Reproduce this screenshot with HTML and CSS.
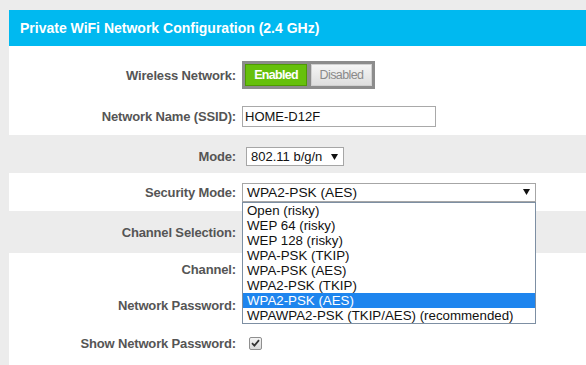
FILE: index.html
```html
<!DOCTYPE html>
<html>
<head>
<meta charset="utf-8">
<title>Private WiFi Network Configuration</title>
<link rel="stylesheet" href="styles.css">
</head>
<body>
<div class="panel">
  <h2 class="panel-title">Private WiFi Network Configuration (2.4 GHz)</h2>
  <div class="form">
    <div class="row">
      <span class="lbl">Wireless Network:</span>
      <div class="toggle">
        <span class="tg-btn tg-on">Enabled</span>
        <span class="tg-btn tg-off">Disabled</span>
      </div>
    </div>
    <div class="row">
      <span class="lbl">Network Name (SSID):</span>
      <div class="text-input">HOME-D12F</div>
    </div>
    <div class="row shade">
      <span class="lbl">Mode:</span>
      <div class="select select-mode">
        <span class="select-value">802.11 b/g/n</span>
        <svg class="arrow" width="7" height="6" viewBox="0 0 7 6"><path d="M0 0H7L3.5 6Z" fill="#111"/></svg>
      </div>
    </div>
    <div class="row">
      <span class="lbl">Security Mode:</span>
      <div class="select select-security">
        <span class="select-value">WPA2-PSK (AES)</span>
        <svg class="arrow" width="7" height="6" viewBox="0 0 7 6"><path d="M0 0H7L3.5 6Z" fill="#111"/></svg>
        <ul class="dropdown">
          <li>Open (risky)</li>
          <li>WEP 64 (risky)</li>
          <li>WEP 128 (risky)</li>
          <li>WPA-PSK (TKIP)</li>
          <li>WPA-PSK (AES)</li>
          <li>WPA2-PSK (TKIP)</li>
          <li class="active">WPA2-PSK (AES)</li>
          <li>WPAWPA2-PSK (TKIP/AES) (recommended)</li>
        </ul>
      </div>
    </div>
    <div class="row shade">
      <span class="lbl">Channel Selection:</span>
    </div>
    <div class="row">
      <span class="lbl">Channel:</span>
    </div>
    <div class="row">
      <span class="lbl">Network Password:</span>
    </div>
    <div class="row">
      <span class="lbl">Show Network Password:</span>
      <span class="checkbox">
        <svg width="9" height="8" viewBox="0 0 9 8"><path d="M1 4.2L3.4 6.6L8 1.2" fill="none" stroke="#333" stroke-width="1.8"/></svg>
      </span>
    </div>
  </div>
</div>
</body>
</html>
```
FILE: styles.css
```css
html, body {
  margin: 0;
  padding: 0;
}
body {
  background: #ececec;
  font-family: "Liberation Sans", Arial, sans-serif;
  overflow: hidden;
}
.panel {
  margin: 10px 0 0 9px;
  background: #fff;
  height: 355px;
}
.panel-title {
  margin: 0;
  height: 36px;
  line-height: 36px;
  background: #00b9f0;
  color: #fff;
  font-size: 14px;
  font-weight: bold;
  padding-left: 11px;
}
.form {
  display: flex;
  flex-direction: column;
}
.row {
  display: flex;
  align-items: center;
  box-sizing: border-box;
}
.row:nth-child(1) { height: 52px; padding-top: 6px; }
.row:nth-child(2) { height: 37px; }
.row:nth-child(3) { height: 38px; padding-top: 5px; }
.row:nth-child(4) { height: 38px; }
.row:nth-child(5) { height: 42px; }
.row:nth-child(6) { height: 32px; }
.row:nth-child(7) { height: 41px; }
.row:nth-child(8) { height: 34px; }
.shade {
  background: #ececec;
}
.lbl {
  width: 227px;
  margin-right: 6px;
  text-align: right;
  font-size: 13px;
  font-weight: bold;
  color: #555;
  letter-spacing: -0.15px;
}
.toggle {
  display: flex;
  gap: 4px;
  padding: 3px;
  background: #8c8c8c;
}
.tg-btn {
  box-sizing: border-box;
  height: 22px;
  line-height: 20px;
  text-align: center;
  font-size: 12.5px;
}
.tg-on {
  width: 62px;
  background: #66c00c;
  border: 1px solid #4e9a02;
  color: #fff;
  font-weight: bold;
  letter-spacing: -0.7px;
}
.tg-off {
  width: 61px;
  background: linear-gradient(#f5f5f5, #dedede);
  border: 1px solid #d0d0d0;
  color: #8a8a8a;
  letter-spacing: -0.6px;
}
.text-input {
  box-sizing: border-box;
  width: 194px;
  height: 21px;
  line-height: 19px;
  border: 1px solid #a9a9a9;
  padding: 0 2px;
  font-size: 13px;
  color: #111;
}
.select {
  position: relative;
  box-sizing: border-box;
  height: 19px;
  border: 1px solid #a6a6a6;
  background: #fff;
  display: flex;
  align-items: center;
  justify-content: space-between;
  padding: 0 5px 0 4px;
  font-size: 13px;
  color: #111;
}
.select-mode {
  width: 98px;
  margin-left: 4px;
}
.select-security {
  width: 294px;
  font-size: 13.7px;
}
.arrow {
  flex: none;
}
.dropdown {
  position: absolute;
  z-index: 10;
  top: 18px;
  left: -1px;
  width: 294px;
  box-sizing: border-box;
  margin: 0;
  padding: 0;
  list-style: none;
  background: #fff;
  border: 1px solid #7d8fa3;
  font-size: 13.3px;
}
.dropdown li {
  height: 15px;
  line-height: 15px;
  padding-left: 4px;
  color: #111;
}
.dropdown li.active {
  background: #1e85ee;
  color: #fff;
}
.checkbox {
  margin-left: 7px;
  width: 13px;
  height: 13px;
  box-sizing: border-box;
  border: 1px solid #8f8f8f;
  border-radius: 2px;
  background: linear-gradient(#f4f4f4, #d9d9d9);
  display: flex;
  align-items: center;
  justify-content: center;
}
```
